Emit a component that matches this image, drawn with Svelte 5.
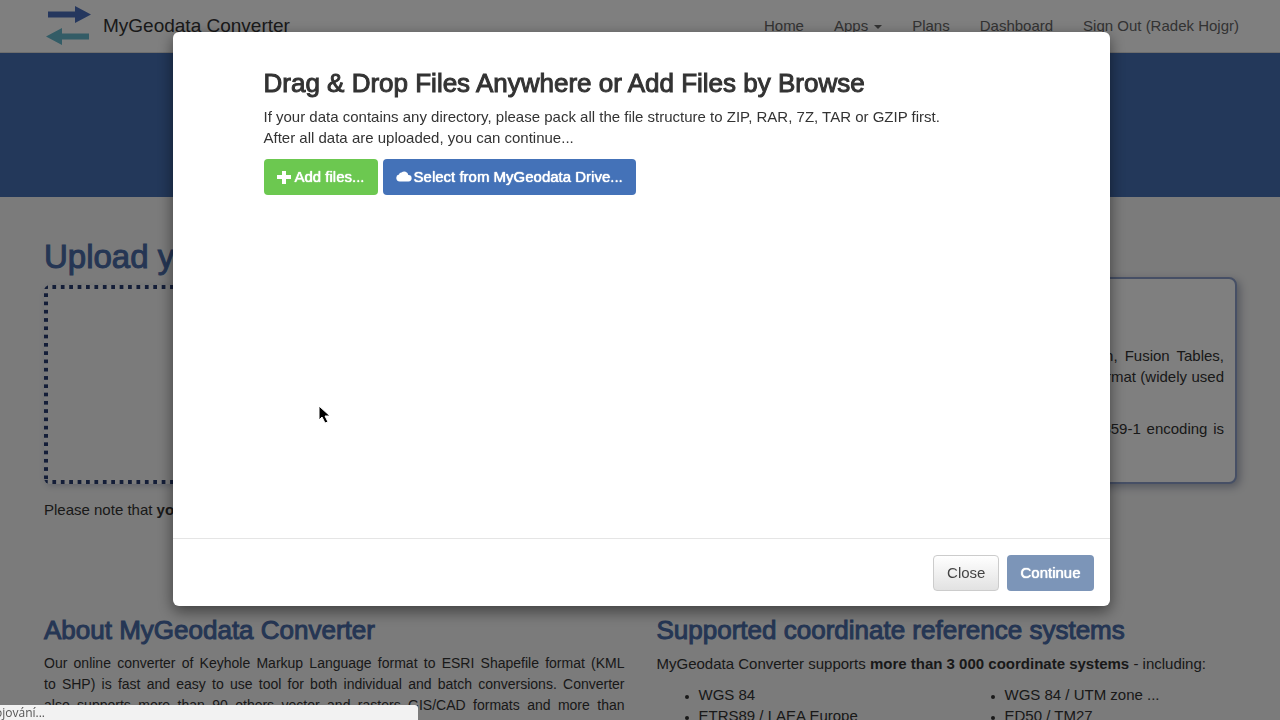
<script>
  const links = ['Home', 'Apps', 'Plans', 'Dashboard', 'Sign Out (Radek Hojgr)'];
</script>

<div class="page">
  <header class="navbar">
    <a class="brand" href="#home">
      <svg width="46" height="40" viewBox="0 0 46 40" aria-hidden="true">
        <path d="M2 5.500h27V0l16 8.500-16 8.500v-5.500H2z" fill="#4a6fbc" />
        <path d="M43 27.500H16V22L0 30.500 16 39v-5.500h27z" fill="#66b8cc" />
      </svg>
      <span>MyGeodata Converter</span>
    </a>
    <nav>
      {#each links as link}
        <a href="#nav">{link}{#if link === 'Apps'}<i class="caret"></i>{/if}</a>
      {/each}
    </nav>
  </header>
  <div class="band"></div>
  <main>
    <h1>Upload your files</h1>
    <div class="columns upload">
      <section class="dropzone" aria-label="Upload"></section>
      <section class="info">
        <p class="line">KML is a file format used to display map data in Google Earth, Fusion Tables,</p>
        <p class="line">Maps and other apps. The ESRI Shapefile is a common vector format (widely used</p>
        <p class="line gap">in GIS). If national characters are not displayed well, the ISO-8859-1 encoding is</p>
      </section>
    </div>
    <p class="note">Please note that <b>your data</b> are removed after conversion.</p>
    <div class="columns">
      <section class="about">
        <h2>About MyGeodata Converter</h2>
        <p class="line">Our online converter of Keyhole Markup Language format to ESRI Shapefile format (KML</p>
        <p class="line">to SHP) is fast and easy to use tool for both individual and batch conversions. Converter</p>
        <p class="line">also supports more than 90 others vector and rasters GIS/CAD formats and more than</p>
      </section>
      <section>
        <h2>Supported coordinate reference systems</h2>
        <p>MyGeodata Converter supports <b>more than 3 000 coordinate systems</b> - including:</p>
        <div class="lists">
          <ul><li>WGS 84</li><li>ETRS89 / LAEA Europe</li></ul>
          <ul><li>WGS 84 / UTM zone ...</li><li>ED50 / TM27</li></ul>
        </div>
      </section>
    </div>
  </main>
</div>

<div class="backdrop">
  <div class="modal" role="dialog" aria-modal="true" aria-labelledby="title">
    <div class="body">
      <h3 id="title">Drag &amp; Drop Files Anywhere or Add Files by Browse</h3>
      <p>If your data contains any directory, please pack all the file structure to ZIP, RAR, 7Z, TAR or GZIP first.</p>
      <p>After all data are uploaded, you can continue...</p>
      <div class="actions">
        <button class="green">
          <svg width="14" height="14" viewBox="0 0 14 14" aria-hidden="true"><path d="M5 1h4v4h5v4H9v5H5V9H0V5h5z" fill="currentColor" /></svg>
          Add files...
        </button>
        <button class="blue">
          <svg width="16" height="14" viewBox="0 0 16 14" aria-hidden="true"><path d="M4 11.500a3.500 3.500 0 0 1-1-6.900A2.500 2.500 0 0 1 5.500 2.600 4 4 0 0 1 12.300 5 3.200 3.200 0 0 1 12.500 11.500z" fill="currentColor" /></svg>
          Select from MyGeodata Drive...
        </button>
      </div>
    </div>
    <footer>
      <button class="plain">Close</button>
      <button class="muted">Continue</button>
    </footer>
  </div>
</div>

<div class="status"><span>Připojování...</span></div>

<svg class="cursor" width="14" height="20" viewBox="0 0 14 20" aria-hidden="true">
  <path d="M1 1v14l3-3 3 6 3-1-3-6h5z" fill="#000" stroke="#fff" />
</svg>

<style>
  :global(body) {
    overflow: hidden;
    font-family: "Liberation Sans", Arial, sans-serif;
    font-size: 15px;
    line-height: 21px;
    color: #333;
  }
  .page {
    height: 100vh;
    overflow: hidden;
    background: #f6f6f6;
  }
  h1, h2, h3, p, ul { margin: 0; }
  h1, h2, h3 {
    font-weight: 500;
    -webkit-text-stroke: 1px currentColor;
  }
  h1, h2 { color: #4a6ca8; }
  a { color: inherit; text-decoration: none; }
  .navbar {
    display: flex;
    justify-content: space-between;
    height: 53px;
    box-sizing: border-box;
    padding: 0 41px 1px 46px;
    background: #fff;
    border-bottom: 1px solid #ddd;
  }
  .brand, nav {
    display: flex;
    align-items: center;
  }
  .brand {
    gap: 11px;
    font-size: 19px;
  }
  nav { gap: 30px; color: #666; }
  .caret {
    display: inline-block;
    margin-left: 6px;
    border: 4px solid transparent;
    border-top-color: currentColor;
    border-bottom: 0;
    vertical-align: middle;
  }
  .band { height: 144px; background: #4670b4; }
  main { padding: 40px 43px 0 44px; }
  h1 { font-size: 33px; line-height: 40px; }
  .columns {
    display: grid;
    grid-template-columns: minmax(0, 1fr) minmax(0, 1fr);
    column-gap: 32px;
  }
  .dropzone {
    --dot: #283c70;
    margin-top: 8px;
    border-radius: 6px;
    background:
      linear-gradient(90deg, var(--dot) 50%, transparent 50%) 0 0 / calc(100% / 69) 4px repeat-x,
      linear-gradient(90deg, var(--dot) 50%, transparent 50%) 0 100% / calc(100% / 69) 4px repeat-x,
      linear-gradient(var(--dot) 50%, transparent 50%) 0 0 / 4px calc(100% / 24) repeat-y,
      linear-gradient(var(--dot) 50%, transparent 50%) 100% 0 / 4px calc(100% / 24) repeat-y;
    box-shadow: 2px 2px 6px #c4c8d4;
  }
  .info {
    padding: 66px 11px 43px 13px;
    border: 2px solid #8c9fca;
    border-radius: 8px;
    background: #fff;
    box-shadow: 3px 3px 8px #a8adbc;
  }
  .line { text-align-last: justify; white-space: nowrap; }
  .about .line { font-size: 14px; }
  .gap { margin-top: 31px; }
  .note { padding: 15px 0 96px; }
  h2 { font-size: 26px; line-height: 28px; margin-bottom: 9px; }
  .lists {
    display: grid;
    grid-template-columns: 306px 1fr;
    margin-top: 10px;
  }
  ul { padding-left: 42px; }
  li::marker { font-size: 12px; }

  .backdrop {
    position: fixed;
    inset: 0;
    padding: 32px 0 0 2px;
    background: rgba(0, 0, 0, 0.5);
  }
  .modal {
    max-width: 937px;
    margin: 0 auto;
    border-radius: 6px;
    background: #fff;
    box-shadow: 0 5px 15px rgba(0, 0, 0, 0.5);
  }
  .body { min-height: 431px; padding: 35px 91px 40px; }
  h3 { font-size: 26px; line-height: 32px; margin-bottom: 7px; }
  .actions { display: flex; gap: 5px; margin-top: 11px; }
  button {
    display: flex;
    align-items: center;
    gap: 4px;
    height: 36px;
    padding: 0 13px 1px;
    border: 0;
    border-radius: 4px;
    font: inherit;
    color: #fff;
    text-shadow: 0 0 1px currentColor, 0 0 1px currentColor;
  }
  .green { background: #6cc850; }
  .blue { background: #4472b8; gap: 2px; }
  .plain {
    border: 1px solid #ccc;
    background: linear-gradient(#fff, #e2e2e2);
    color: #444;
    text-shadow: none;
  }
  .muted { background: #7c95b8; }
  footer {
    display: flex;
    justify-content: flex-end;
    gap: 8px;
    padding: 16px 16px 15px;
    border-top: 1px solid #e5e5e5;
  }
  .status {
    position: fixed;
    left: 0;
    bottom: 0;
    width: 418px;
    height: 15px;
    border-radius: 0 3px 0 0;
    background: #f2f2f2;
    font: 12px/16px "Open Sans", sans-serif;
    color: #555;
  }
  .status span {
    display: flex;
    justify-content: flex-end;
    width: 45px;
    overflow: hidden;
  }
  .cursor {
    position: fixed;
    left: 318px;
    top: 405px;
  }
</style>
